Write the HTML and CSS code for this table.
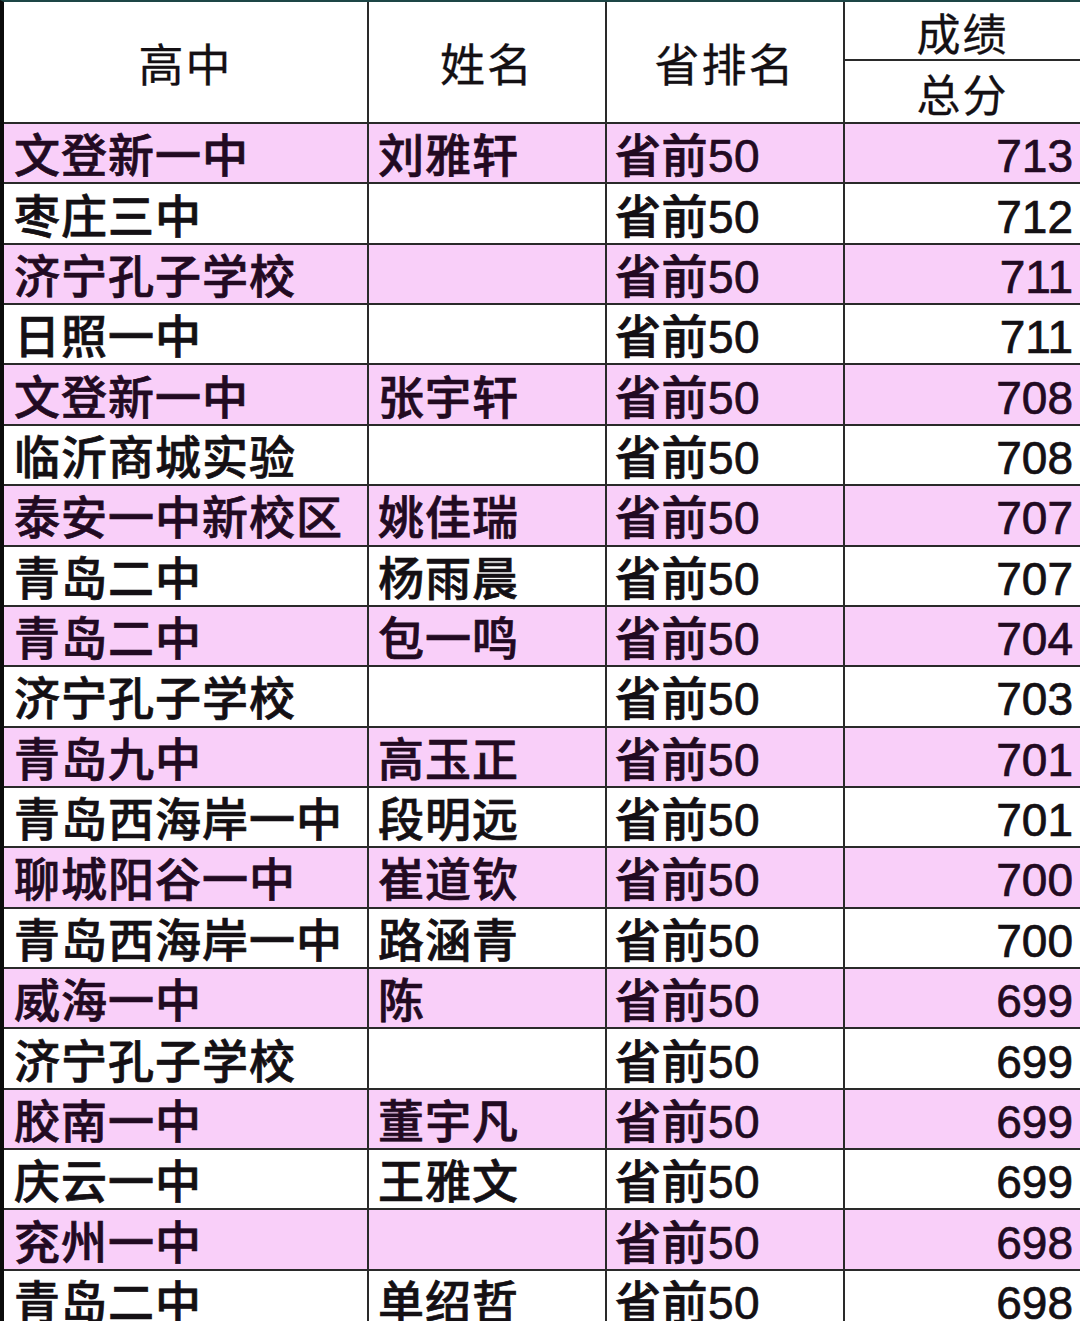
FILE: index.html
```html
<!DOCTYPE html>
<html lang="zh-CN">
<head>
<meta charset="utf-8">
<title>成绩表</title>
<link rel="stylesheet" href="styles.css">
</head>
<body>
<div class="sheet">
  <div class="head">
    <div class="hcell">高中</div>
    <div class="hcell">姓名</div>
    <div class="hcell">省排名</div>
    <div class="hsplit">
      <div class="htop">成绩</div>
      <div class="hbot">总分</div>
    </div>
  </div>
  <div class="row pink"><div class="c school">文登新一中</div><div class="c name">刘雅轩</div><div class="c rank">省前50</div><div class="c score">713</div></div>
  <div class="row"><div class="c school">枣庄三中</div><div class="c name"></div><div class="c rank">省前50</div><div class="c score">712</div></div>
  <div class="row pink"><div class="c school">济宁孔子学校</div><div class="c name"></div><div class="c rank">省前50</div><div class="c score">711</div></div>
  <div class="row"><div class="c school">日照一中</div><div class="c name"></div><div class="c rank">省前50</div><div class="c score">711</div></div>
  <div class="row pink"><div class="c school">文登新一中</div><div class="c name">张宇轩</div><div class="c rank">省前50</div><div class="c score">708</div></div>
  <div class="row"><div class="c school">临沂商城实验</div><div class="c name"></div><div class="c rank">省前50</div><div class="c score">708</div></div>
  <div class="row pink"><div class="c school">泰安一中新校区</div><div class="c name">姚佳瑞</div><div class="c rank">省前50</div><div class="c score">707</div></div>
  <div class="row"><div class="c school">青岛二中</div><div class="c name">杨雨晨</div><div class="c rank">省前50</div><div class="c score">707</div></div>
  <div class="row pink"><div class="c school">青岛二中</div><div class="c name">包一鸣</div><div class="c rank">省前50</div><div class="c score">704</div></div>
  <div class="row"><div class="c school">济宁孔子学校</div><div class="c name"></div><div class="c rank">省前50</div><div class="c score">703</div></div>
  <div class="row pink"><div class="c school">青岛九中</div><div class="c name">高玉正</div><div class="c rank">省前50</div><div class="c score">701</div></div>
  <div class="row"><div class="c school">青岛西海岸一中</div><div class="c name">段明远</div><div class="c rank">省前50</div><div class="c score">701</div></div>
  <div class="row pink"><div class="c school">聊城阳谷一中</div><div class="c name">崔道钦</div><div class="c rank">省前50</div><div class="c score">700</div></div>
  <div class="row"><div class="c school">青岛西海岸一中</div><div class="c name">路涵青</div><div class="c rank">省前50</div><div class="c score">700</div></div>
  <div class="row pink"><div class="c school">威海一中</div><div class="c name">陈</div><div class="c rank">省前50</div><div class="c score">699</div></div>
  <div class="row"><div class="c school">济宁孔子学校</div><div class="c name"></div><div class="c rank">省前50</div><div class="c score">699</div></div>
  <div class="row pink"><div class="c school">胶南一中</div><div class="c name">董宇凡</div><div class="c rank">省前50</div><div class="c score">699</div></div>
  <div class="row"><div class="c school">庆云一中</div><div class="c name">王雅文</div><div class="c rank">省前50</div><div class="c score">699</div></div>
  <div class="row pink"><div class="c school">兖州一中</div><div class="c name"></div><div class="c rank">省前50</div><div class="c score">698</div></div>
  <div class="row"><div class="c school">青岛二中</div><div class="c name">单绍哲</div><div class="c rank">省前50</div><div class="c score">698</div></div>
</div>
</body>
</html>
```

FILE: styles.css
```css
html, body {
  margin: 0;
  padding: 0;
  background: #ffffff;
}

body {
  width: 1080px;
  height: 1321px;
  overflow: hidden;
  font-family: "Liberation Sans", "Noto Sans CJK SC", sans-serif;
  color: #141014;
}

.sheet {
  width: 1080px;
  border-left: 4px solid #0c0c0c;
  border-top: 2px solid #1d4646;
  box-sizing: border-box;
}

.head {
  display: grid;
  grid-template-columns: 365px 238px 238px 1fr;
  height: 120px;
  border-bottom: 2px solid #2a2a2a;
  box-sizing: content-box;
}

.hcell {
  display: flex;
  align-items: center;
  justify-content: center;
  font-size: 45px;
  border-right: 2px solid #2a2a2a;
  padding-bottom: 4px;
  box-sizing: border-box;
  letter-spacing: 2px;
  -webkit-text-stroke: 0.3px #141014;
}

.hsplit {
  display: grid;
  grid-template-rows: 59px 1fr;
}

.htop, .hbot {
  display: flex;
  align-items: center;
  justify-content: center;
  font-size: 44px;
  letter-spacing: 2px;
  -webkit-text-stroke: 0.3px #141014;
}

.htop {
  border-bottom: 2px solid #2a2a2a;
  padding-top: 2px;
}

.hbot {
  padding-bottom: 2px;
}

.row {
  display: grid;
  grid-template-columns: 365px 238px 238px 1fr;
  height: 60.37px;
  border-bottom: 2px solid #2a2a2a;
  box-sizing: border-box;
  background: #ffffff;
}

.row.pink {
  background: #f9cff9;
  color: #220a22;
}

.c {
  display: flex;
  align-items: center;
  font-size: 46px;
  font-weight: 500;
  line-height: 1;
  padding-top: 6px;
  box-sizing: border-box;
  border-right: 2px solid #2a2a2a;
  white-space: nowrap;
  overflow: hidden;
  -webkit-text-stroke: 0.7px currentColor;
}

.school {
  padding-left: 10px;
  letter-spacing: 1px;
}

.name {
  padding-left: 9px;
  letter-spacing: 1px;
}

.rank {
  padding-left: 8px;
  letter-spacing: 0.5px;
}

.score {
  justify-content: flex-end;
  padding-right: 7px;
  border-right: none;
}
```
